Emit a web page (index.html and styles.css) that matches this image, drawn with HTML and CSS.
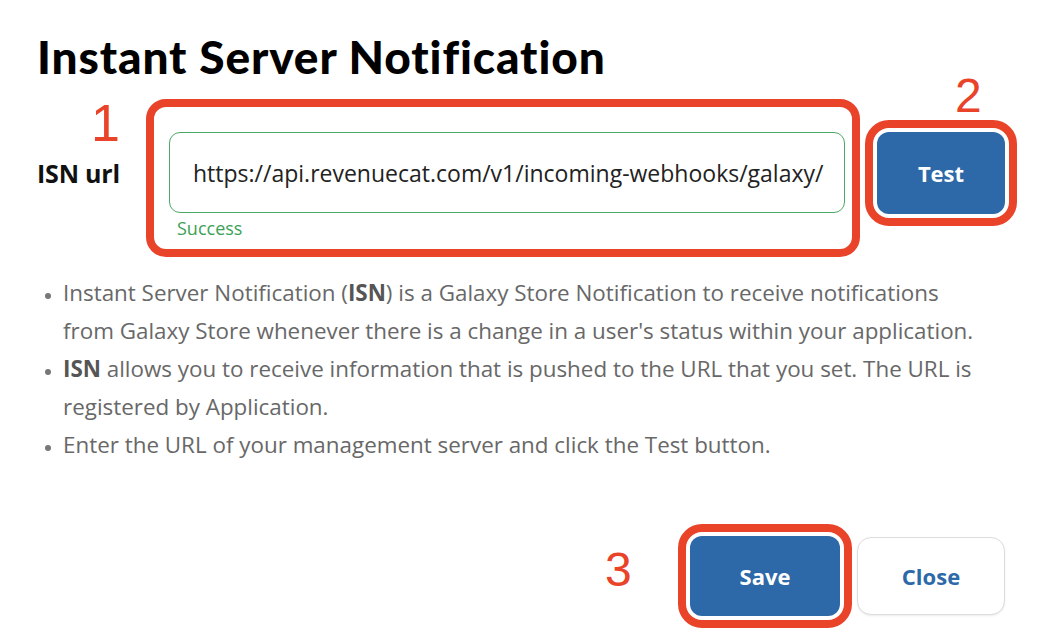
FILE: index.html
```html
<!DOCTYPE html>
<html lang="en">
<head>
<meta charset="utf-8">
<title>Instant Server Notification</title>
<link rel="stylesheet" href="styles.css">
</head>
<body>
<div class="dialog">
  <h1 class="title">Instant Server Notification</h1>
  <div class="row">
    <div class="label">ISN url</div>
    <div class="annot-box">
      <span class="num num-1">1</span>
      <div class="input">https://api.revenuecat.com/v1/incoming-webhooks/galaxy/</div>
      <div class="success">Success</div>
    </div>
    <div class="test-wrap">
      <span class="num num-2">2</span>
      <button class="btn btn-primary btn-test marked">Test</button>
    </div>
  </div>
  <ul class="notes">
    <li>Instant Server Notification (<b>ISN</b>) is a Galaxy Store Notification to receive notifications from Galaxy Store whenever there is a change in a user's status within your application.</li>
    <li><b>ISN</b> allows you to receive information that is pushed to the URL that you set. The URL is registered by Application.</li>
    <li>Enter the URL of your management server and click the Test button.</li>
  </ul>
  <div class="footer">
    <div class="save-wrap">
      <span class="num num-3">3</span>
      <button class="btn btn-primary btn-save marked">Save</button>
    </div>
    <button class="btn btn-secondary">Close</button>
  </div>
</div>
</body>
</html>
```
FILE: styles.css
```css
* { box-sizing: border-box; }
html, body { margin: 0; padding: 0; background: #fff; }
body { font-family: "Open Sans", "Noto Sans", sans-serif; color: #222; }

.dialog {
  width: 1042px;
  height: 636px;
  padding: 29px 37px 0 37px;
}

.title {
  margin: 0;
  font-family: Lato, "Open Sans", sans-serif;
  font-weight: 900;
  font-size: 46px;
  line-height: 56px;
  color: #000;
  letter-spacing: 0.9px;
}

.row {
  display: flex;
  align-items: flex-start;
  margin-top: 14px;
}

.label {
  width: 109px;
  height: 81px;
  margin-top: 33px;
  display: flex;
  align-items: center;
  font-weight: 700;
  font-size: 25px;
  color: #111;
  letter-spacing: -0.2px;
}

.annot-box {
  position: relative;
  width: 714px;
  height: 158px;
  border: 8px solid #e9432a;
  border-radius: 20px;
  padding: 25px 7px 0 15px;
}

.input {
  height: 81px;
  border: 1.5px solid #4da766;
  border-radius: 11px;
  padding-left: 23px;
  display: flex;
  align-items: center;
  font-size: 23px;
  color: #222;
  white-space: nowrap;
}

.success {
  margin-top: 3px;
  padding-left: 8px;
  font-size: 18px;
  line-height: 24px;
  color: #3c9f57;
}

.num {
  position: absolute;
  font-family: "Liberation Sans", Arial, sans-serif;
  font-weight: 400;
  color: #e9432a;
  line-height: 1;
}
.num-1 { left: -63px; top: -10px; font-size: 52px; }
.num-2 { left: 78px; top: -60px; font-size: 48px; }
.num-3 { left: -85px; top: 10px; font-size: 48px; }

.test-wrap {
  position: relative;
  margin-left: 17px;
  margin-top: 33px;
}

.btn {
  font-family: "Open Sans", "Noto Sans", sans-serif;
  font-weight: 700;
  font-size: 22px;
  border-radius: 12px;
  cursor: pointer;
}
.btn-primary {
  background: #2d69a8;
  color: #fff;
  border: none;
}
.marked {
  outline: 8px solid #e9432a;
  outline-offset: 4px;
}
.btn-test { width: 128px; height: 82px; }

.notes {
  margin: 17px 0 0 0;
  padding: 0 23px 0 26px;
  font-size: 22.4px;
  line-height: 38px;
  color: #686868;
}
.notes b { font-weight: 700; color: #555; }
.notes li::marker { font-size: 16px; color: #777; }

.footer {
  display: flex;
  justify-content: flex-end;
  align-items: center;
  gap: 17px;
  margin-top: 72px;
}
.save-wrap { position: relative; }
.btn-save { width: 150px; height: 80px; display: block; }
.btn-secondary {
  width: 148px;
  height: 78px;
  background: #fff;
  color: #2d69a8;
  border: 1.5px solid #dcdcdc;
  border-radius: 14px;
  box-shadow: 0 1px 2px rgba(0,0,0,0.08);
}
```
